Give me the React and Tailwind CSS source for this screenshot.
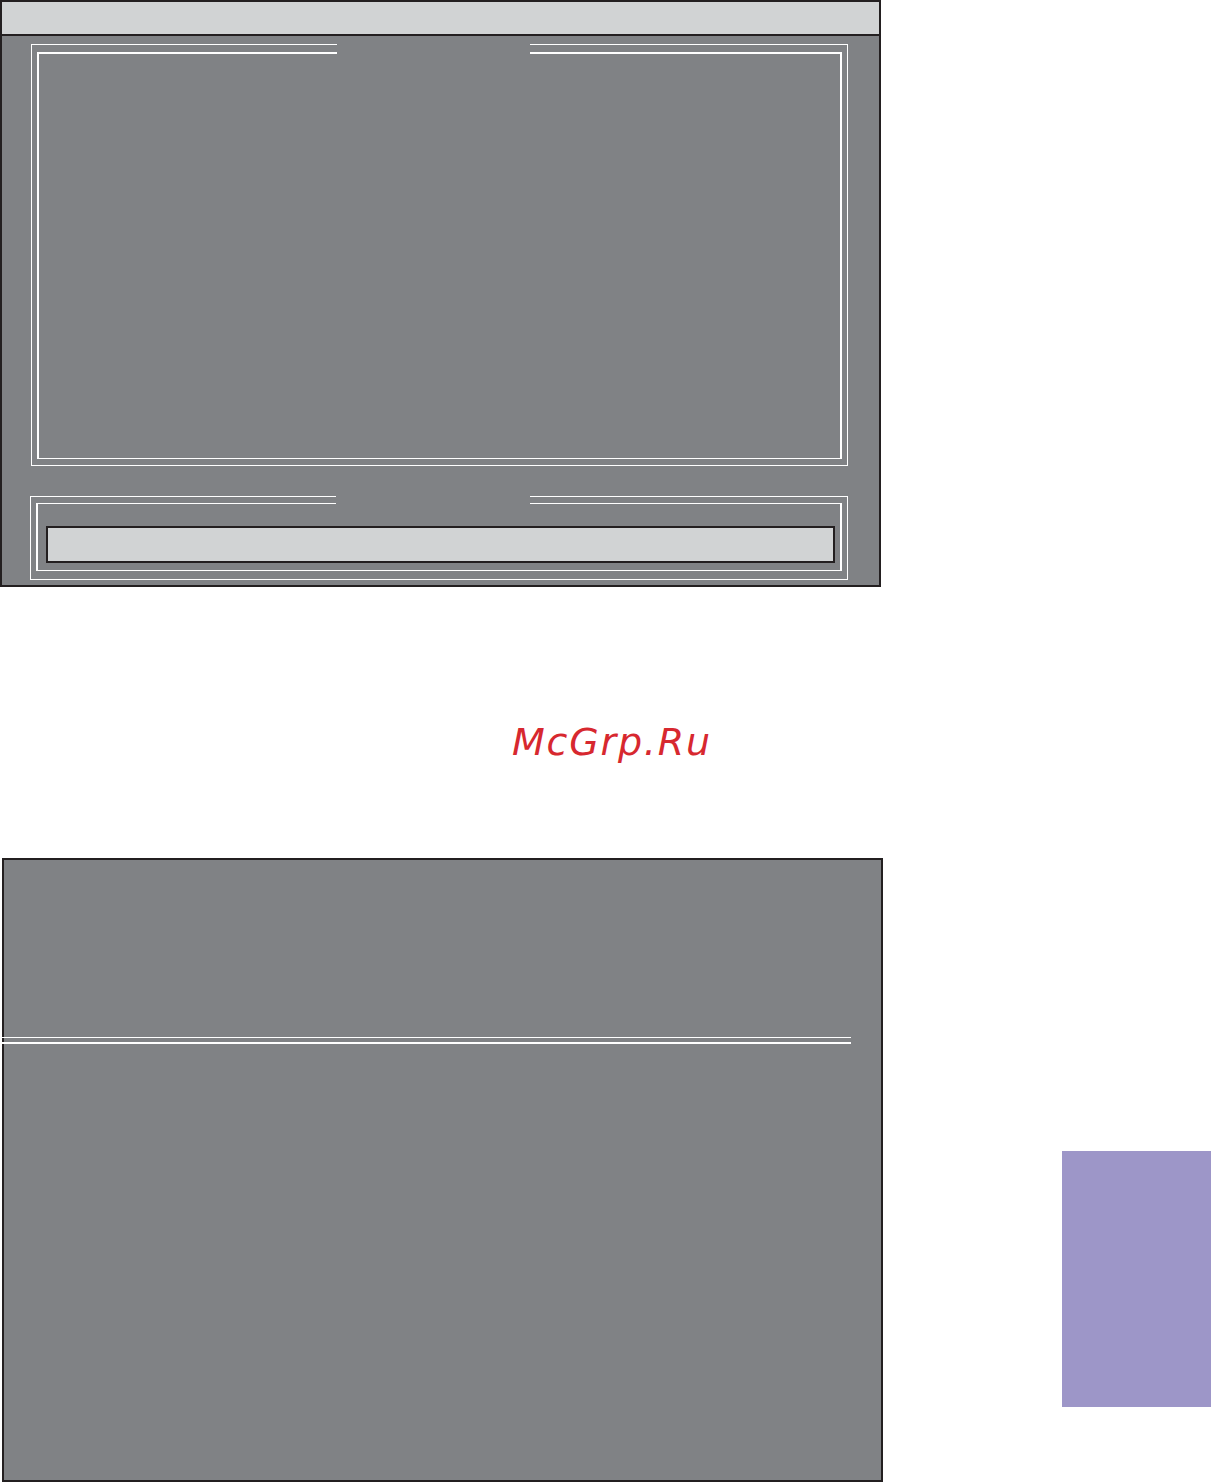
export default function App() {
  return (
    <div className="w-[1211px] h-[1483px] bg-white relative overflow-hidden" style={{ fontFamily: '"DejaVu Sans", sans-serif' }}>
      {/* Top panel */}
      <div className="w-[881px] h-[587px] border-2 border-[#231f20] bg-[#808285] flex flex-col">
        <div className="h-[34px] bg-[#d1d3d4] border-b-2 border-[#231f20] shrink-0" />
        <div className="relative flex flex-col pl-[29px]">
          {/* Frame 1 */}
          <div className="mt-[8px] w-[817px] h-[422px] border border-white flex flex-col">
            <div className="ml-[5px] mt-[7px] w-[805px] h-[407px] border-t-2 border-x-2 border-b border-white" />
          </div>
          {/* Frame 2 */}
          <div className="mt-[30px] -ml-[1px] w-[818px] h-[84px] border border-white flex flex-col">
            <div className="ml-[5px] mt-[6px] w-[806px] h-[68px] border-y border-x-2 border-white flex flex-col">
              <div className="ml-[8px] mt-[22px] w-[789px] h-[37px] border-2 border-[#231f20] bg-[#d1d3d4]" />
            </div>
          </div>
          {/* title gaps */}
          <div className="absolute left-[335px] top-[6px] w-[193px] h-[12px] bg-[#808285]" />
          <div className="absolute left-[334px] top-[458px] w-[194px] h-[11px] bg-[#808285]" />
        </div>
      </div>

      {/* Watermark */}
      <div className="mt-[136px] h-[38px] pl-[512px] leading-[38px] text-[38px] italic tracking-[1.8px] text-[#d7282f]" style={{ fontFamily: '"DejaVu Sans", sans-serif' }}>
        McGrp.Ru
      </div>

      {/* Bottom section */}
      <div className="mt-[97px] flex items-start">
        <div className="ml-[2px] w-[881px] h-[624px] border-2 border-[#231f20] bg-[#808285] flex flex-col">
          <div className="-ml-[2px] mt-[177px] w-[849px] h-[1px] bg-white" />
          <div className="-ml-[2px] mt-[4px] w-[849px] h-[2px] bg-white" />
        </div>
        <div className="ml-[179px] mt-[293px] w-[149px] h-[256px] bg-[#9d96c8]" />
      </div>
    </div>
  );
}
